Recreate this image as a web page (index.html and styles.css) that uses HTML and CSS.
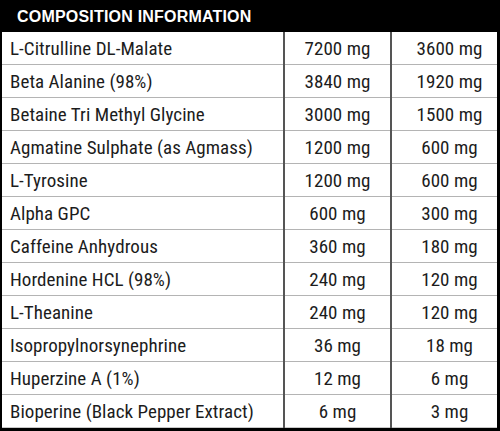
FILE: index.html
```html
<!DOCTYPE html>
<html>
<head>
<meta charset="utf-8">
<link rel="stylesheet" href="styles.css">
</head>
<body>
<div class="panel">
  <div class="header">COMPOSITION INFORMATION</div>
  <table class="comp">
    <tr><td class="name">L-Citrulline DL-Malate</td><td class="v1">7200 mg</td><td class="v2">3600 mg</td></tr>
    <tr><td class="name">Beta Alanine (98%)</td><td class="v1">3840 mg</td><td class="v2">1920 mg</td></tr>
    <tr><td class="name">Betaine Tri Methyl Glycine</td><td class="v1">3000 mg</td><td class="v2">1500 mg</td></tr>
    <tr><td class="name">Agmatine Sulphate (as Agmass)</td><td class="v1">1200 mg</td><td class="v2">600 mg</td></tr>
    <tr><td class="name">L-Tyrosine</td><td class="v1">1200 mg</td><td class="v2">600 mg</td></tr>
    <tr><td class="name">Alpha GPC</td><td class="v1">600 mg</td><td class="v2">300 mg</td></tr>
    <tr><td class="name">Caffeine Anhydrous</td><td class="v1">360 mg</td><td class="v2">180 mg</td></tr>
    <tr><td class="name">Hordenine HCL (98%)</td><td class="v1">240 mg</td><td class="v2">120 mg</td></tr>
    <tr><td class="name">L-Theanine</td><td class="v1">240 mg</td><td class="v2">120 mg</td></tr>
    <tr><td class="name">Isopropylnorsynephrine</td><td class="v1">36 mg</td><td class="v2">18 mg</td></tr>
    <tr><td class="name">Huperzine A (1%)</td><td class="v1">12 mg</td><td class="v2">6 mg</td></tr>
    <tr><td class="name">Bioperine (Black Pepper Extract)</td><td class="v1">6 mg</td><td class="v2">3 mg</td></tr>
  </table>
</div>
</body>
</html>
```
FILE: styles.css
```css
html, body {
  margin: 0;
  padding: 0;
  background: #fff;
}
.panel {
  width: 500px;
  height: 431px;
  box-sizing: border-box;
  border-left: 2px solid #000;
  border-right: 3px solid #000;
  border-bottom: 3px solid #000;
  background: #fff;
}
.header {
  height: 32px;
  background: #000;
  color: #fff;
  font-family: "Liberation Sans", Arial, sans-serif;
  font-weight: 700;
  font-size: 16px;
  line-height: 33px;
  padding-left: 15px;
  letter-spacing: 0.2px;
}
.comp {
  width: 100%;
  border-collapse: collapse;
  font-family: "Roboto Condensed", Roboto, sans-serif;
  font-size: 19px;
  letter-spacing: 0.05px;
  color: #1c1c1c;
}
.comp td {
  height: 32px;
  padding: 0;
  border-bottom: 1px solid #b4b4b4;
  vertical-align: middle;
  white-space: nowrap;
}
.comp tr:last-child td {
  border-bottom: 1px solid #c8c8c8;
}
.comp .name {
  width: 282px;
  padding-left: 8px;
  box-sizing: border-box;
}
.comp .v1 {
  width: 105px;
  text-align: center;
  border-left: 2px solid #555;
}
.comp .v2 {
  text-align: center;
  border-left: 2px solid #555;
  padding-left: 10px;
}
```
